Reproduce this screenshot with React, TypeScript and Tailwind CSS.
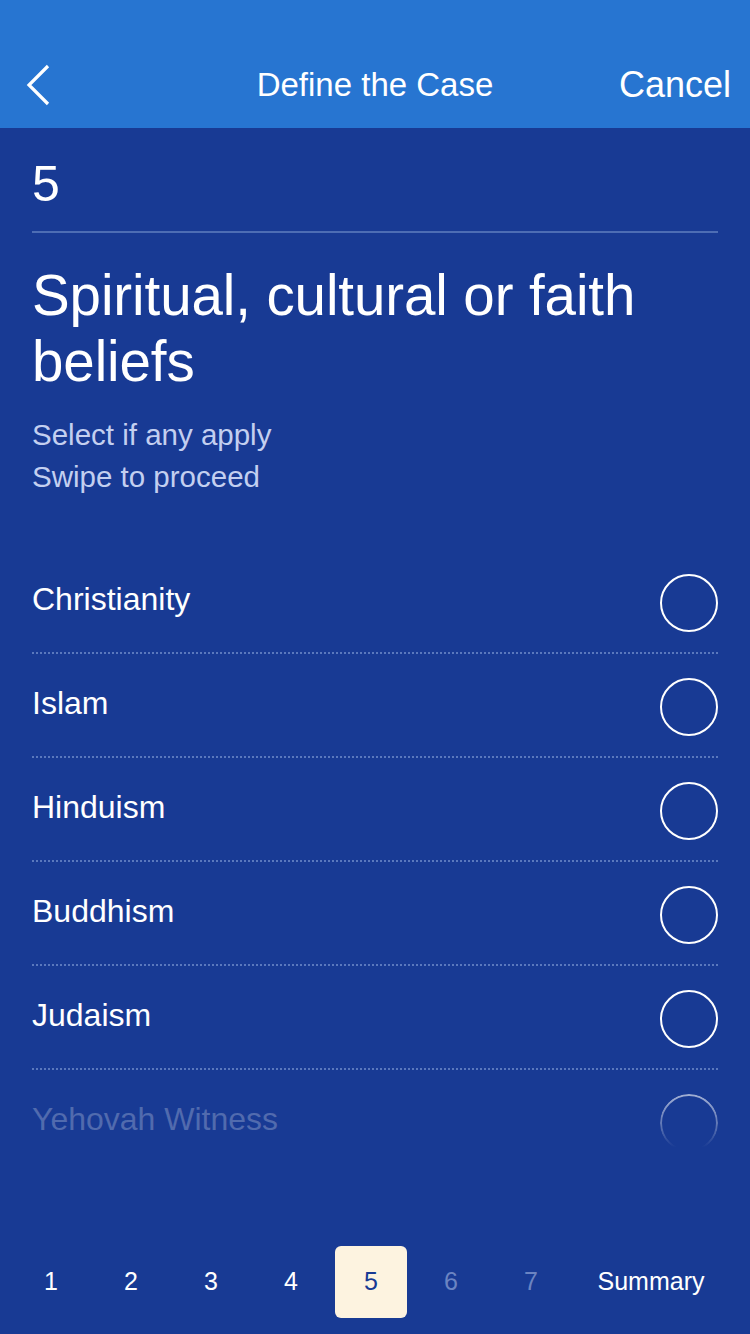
const items = ["Christianity", "Islam", "Hinduism", "Buddhism", "Judaism", "Yehovah Witness"];
const steps = ["1", "2", "3", "4", "5", "6", "7"];

const Header = () => {
  return (
    <div className="h-[128px] bg-[#2775d1] flex items-end pb-[13px]">
      <div className="grid grid-cols-[140px_1fr_140px] items-center w-full h-[60px] px-[19px]">
        <svg width="26" height="42" viewBox="0 0 26 42" className="ml-[7px]">
          <polyline points="22,2 3,21 22,40" fill="none" stroke="white" strokeWidth="3.2" />
        </svg>
        <div className="text-center text-[33px] text-white">Define the Case</div>
        <div className="text-right text-[36px] text-white">Cancel</div>
      </div>
    </div>
  );
};

const Row = ({ label, faded }: { label: string; faded?: boolean }) => {
  return (
    <div className="h-[104px] flex items-center justify-between border-b-2 border-dotted border-[#5a78bd]">
      <span className={faded ? "text-[32px] text-white/25 -mt-[4px]" : "text-[32px] text-white -mt-[4px]"}>{label}</span>
      <div
        className={
          faded
            ? "w-[58px] h-[58px] mt-[4px] rounded-full border-2 border-white shrink-0 [mask-image:linear-gradient(to_bottom,rgba(0,0,0,0.6),rgba(0,0,0,0.3)_55%,transparent_92%)]"
            : "w-[58px] h-[58px] mt-[4px] rounded-full border-2 border-white shrink-0"
        }
      />
    </div>
  );
};

export default function App() {
  return (
    <div className="w-[750px] h-[1334px] bg-[#183a94] flex flex-col font-['Liberation_Sans',Arial,sans-serif] overflow-hidden">
      <Header />
      <div className="px-[32px] flex-1 flex flex-col">
        <div className="h-[105px] border-b-2 border-[#4d6db4] flex items-center">
          <span className="text-[50px] text-white leading-none mt-[8px]">5</span>
        </div>
        <h1 className="text-[56.5px] leading-[66px] text-white mt-[30px] tracking-[-0.1px]">
          Spiritual, cultural or faith beliefs
        </h1>
        <div className="text-[29.5px] leading-[42px] text-[#c3cff0] mt-[19px]">
          <div>Select if any apply</div>
          <div>Swipe to proceed</div>
        </div>
        <div className="mt-[52px] h-[601px] overflow-hidden">
          {items.map((it, i) => (
            <Row key={it} label={it} faded={i === items.length - 1} />
          ))}
        </div>
      </div>
      <div className="h-[104px] flex items-center pl-[11px]">
        {steps.map((s, i) => (
          <div key={s} className="w-[80px] h-[72px] flex items-center justify-center">
            <div
              className={
                i === 4
                  ? "w-[72px] h-[72px] rounded-[6px] bg-[#fdf3e0] text-[#183a94] text-[25px] flex items-center justify-center"
                  : i > 4
                  ? "text-[25px] text-[#6b84c2]"
                  : "text-[25px] text-white"
              }
            >
              {s}
            </div>
          </div>
        ))}
        <div className="w-[160px] text-center text-[25px] text-white">Summary</div>
      </div>
    </div>
  );
}
